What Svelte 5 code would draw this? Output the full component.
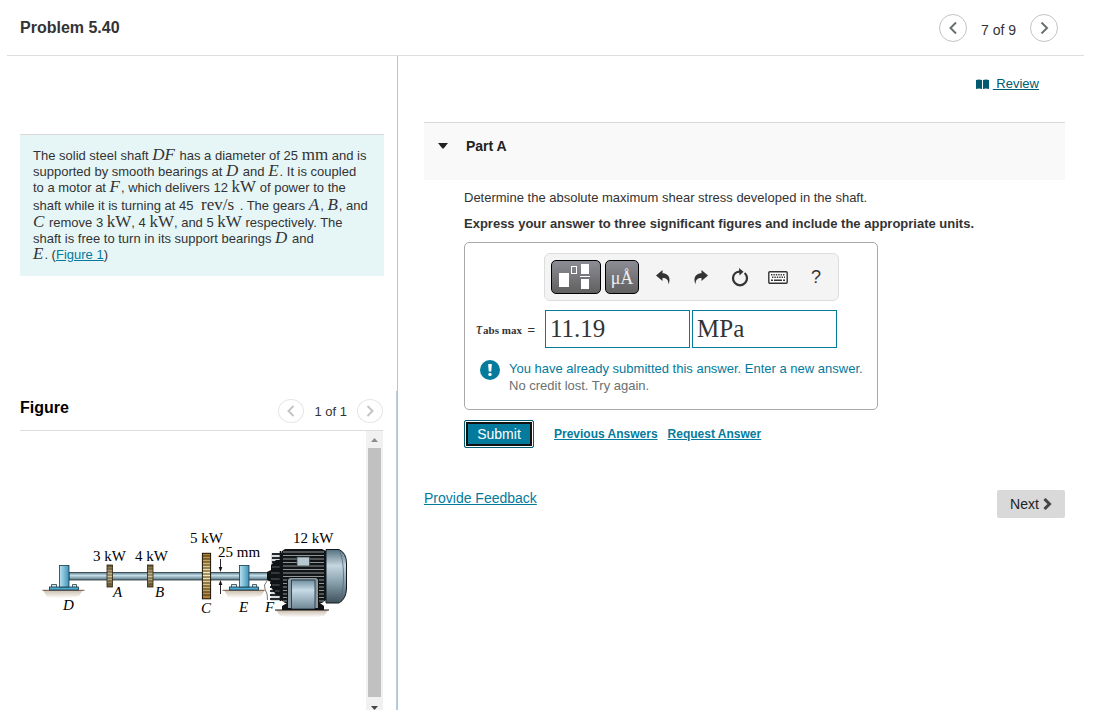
<script lang="ts">
  let answer = $state("11.19");
  let units = $state("MPa");
  let open = $state(true);

  const fins = Array.from({ length: 15 }, (_, i) => 32 + i * 3.5);
  const rearFins = [34, 38, 42, 46, 50, 63, 67, 71, 75, 79];
  const smallTeeth = [45, 48, 51, 54, 57, 60, 63];
  const bigTeeth = [36, 39, 42, 45, 48, 51, 54, 57, 60, 63, 66, 69, 72, 75];
</script>

<div class="page">
  <header>
    <h1>Problem 5.40</h1>
    <nav class="pager" aria-label="Items">
      <button class="round" aria-label="Previous item">
        <svg width="10" height="12" viewBox="0 0 10 12"><path d="M8 0.5 L2.5 6 L8 11.5" /></svg>
      </button>
      <span>7 of 9</span>
      <button class="round" aria-label="Next item">
        <svg width="10" height="12" viewBox="0 0 10 12"><path d="M2.5 0.5 L8 6 L2.5 11.5" /></svg>
      </button>
    </nav>
  </header>

  <main>
    <section class="left">
      <div class="intro">
        <p>
          The solid steel shaft <i>DF</i> has a diameter of 25 <b>mm</b> and is<br />
          supported by smooth bearings at <i>D</i> and <i>E</i>. It is coupled<br />
          to a motor at <i>F</i>, which delivers 12 <b>kW</b> of power to the<br />
          shaft while it is turning at 45 <b class="fraction">rev/s</b> . The gears <i>A</i>, <i>B</i>, and<br />
          <i>C</i> remove 3 <b>kW</b>, 4 <b>kW</b>, and 5 <b>kW</b> respectively. The<br />
          shaft is free to turn in its support bearings <i>D</i> and<br />
          <i>E</i>. (<a href="#figure">Figure 1</a>)
        </p>
      </div>

      <div class="figure" id="figure">
        <div class="figure-head">
          <h2>Figure</h2>
          <nav class="pager small" aria-label="Figures">
            <button class="round" aria-label="Previous figure" disabled>
              <svg width="10" height="12" viewBox="0 0 10 12"><path d="M7.5 1 L2.5 6 L7.5 11" /></svg>
            </button>
            <span>1 of 1</span>
            <button class="round" aria-label="Next figure" disabled>
              <svg width="10" height="12" viewBox="0 0 10 12"><path d="M2.5 1 L7.5 6 L2.5 11" /></svg>
            </button>
          </nav>
        </div>

        <div class="figure-body">
          <div class="drawing">
            <svg width="330" height="110" viewBox="0 0 330 110" role="img" aria-label="Shaft with gears and motor">
              <defs>
                <linearGradient id="shaft" x1="0" y1="0" x2="0" y2="1">
                  <stop offset="0" stop-color="#5f7f8c" />
                  <stop offset="0.4" stop-color="#c3dde8" />
                  <stop offset="1" stop-color="#54727f" />
                </linearGradient>
                <linearGradient id="block" x1="0" y1="0" x2="1" y2="0">
                  <stop offset="0" stop-color="#b9e2f1" />
                  <stop offset="1" stop-color="#3f93b8" />
                </linearGradient>
                <linearGradient id="brass" x1="0" y1="0" x2="0" y2="1">
                  <stop offset="0" stop-color="#a97824" />
                  <stop offset="0.45" stop-color="#fff2bd" />
                  <stop offset="1" stop-color="#a8752a" />
                </linearGradient>
                <linearGradient id="bronze" x1="0" y1="0" x2="0" y2="1">
                  <stop offset="0" stop-color="#74643f" />
                  <stop offset="0.5" stop-color="#d4c79f" />
                  <stop offset="1" stop-color="#69572f" />
                </linearGradient>
                <linearGradient id="cap" x1="0" y1="0" x2="0" y2="1">
                  <stop offset="0" stop-color="#55707f" />
                  <stop offset="0.3" stop-color="#c5d6df" />
                  <stop offset="0.6" stop-color="#8ba3b0" />
                  <stop offset="1" stop-color="#3f515d" />
                </linearGradient>
                <linearGradient id="box" x1="0" y1="0" x2="0" y2="1">
                  <stop offset="0" stop-color="#6f8fa0" />
                  <stop offset="0.35" stop-color="#c7dbe6" />
                  <stop offset="1" stop-color="#6e8796" />
                </linearGradient>
                <linearGradient id="ground" x1="0" y1="0" x2="0" y2="1">
                  <stop offset="0" stop-color="#c9bba9" />
                  <stop offset="1" stop-color="#ffffff" />
                </linearGradient>
              </defs>

              <path d="M13 70 H53 L49 76 Q34 80 17 77 Z" fill="url(#ground)" />
              <path d="M194 70 H235 L231 76 Q215 80 198 77 Z" fill="url(#ground)" />
              <path d="M246 90 H298 L294 96 Q270 99 250 96 Z" fill="url(#ground)" />

              <rect x="39" y="52.5" width="200" height="7.5" fill="url(#shaft)" stroke="#26343b" stroke-width="0.8" />

              {#each [29.5, 209.5] as x}
                <path d="M{x - 17} 70.3 H{x + 25}" stroke="#6b4b3b" stroke-width="0.9" />
                <path
                  d="M{x - 8} 67 V64.5 H{x - 3} V67 M{x + 13} 67 V64.5 H{x + 17} V67"
                  fill="#d4e6ed"
                  stroke="#263e49"
                  stroke-width="0.8"
                />
                <rect x={x - 10} y="67" width="29" height="3" fill="#4eaad0" stroke="#16323f" stroke-width="0.8" />
                <rect {x} y="45.5" width="9.5" height="21.5" fill="url(#block)" stroke="#173b4c" stroke-width="0.8" />
              {/each}

              {#each [77, 117.5] as x}
                <rect {x} y="45" width="5.5" height="22" fill="url(#bronze)" stroke="#2c2412" stroke-width="0.8" />
                {#each smallTeeth as y}
                  <path d="M{x} {y + 1} h5.5" stroke="#46381c" stroke-width="0.8" />
                {/each}
              {/each}

              <rect x="172.4" y="33.3" width="8.2" height="45.5" fill="url(#brass)" stroke="#171206" />
              {#each bigTeeth as y}
                <path d="M172 {y} h9" stroke="#2d210b" stroke-width="0.9" />
              {/each}

              <g stroke="#111" stroke-width="0.9" fill="#111">
                <path d="M190.5 39 V50 M190.5 74 V62" />
                <path d="M188.7 47 h3.6 L190.5 52 Z M188.7 65 h3.6 L190.5 60 Z" stroke="none" />
              </g>

              <path d="M241 33 H252 V81 H241 Z" fill="#d8dcdd" />
              {#each rearFins as y}
                <path d="M{y < 57 ? 242 : 240} {y} H252" stroke="#24292b" stroke-width="2" />
              {/each}
              <path d="M237 52 L241 50 V45 L246 40 H252 V75 H246 L241 67 V62 L237 60 Z" fill="#101314" />
              <path d="M242 47 h8 M241 53 h9 M241 59 h9 M242 65 h8 M245 71 h6" stroke="#697277" stroke-width="0.8" />

              <path d="M252 31 L255 29 H292 L296 31 V80 L292 83 H255 L251 80 V34 Z" fill="#121516" />
              {#each fins as y}
                <path d="M253 {y} H294" stroke="#aeb5b8" stroke-width="0.8" />
              {/each}
              <path d="M250.5 31 V81" stroke="#101314" stroke-width="1.6" />
              <rect x="267" y="37" width="12.5" height="9" fill="#b8c8d0" stroke="#38464d" stroke-width="0.8" />

              <path d="M296 29.5 H309 Q316.5 33 316.5 43 V69 Q316 79 309 83 H296 Z" fill="url(#cap)" stroke="#131a1f" />
              <path d="M309 30 Q313.5 38 313.5 56 Q313.5 74 309 82.5" fill="none" stroke="#526a78" stroke-width="0.8" />

              <path d="M252 90 V86 L257 83 H290 L294 86 V90 Z" fill="#0f1112" />
              <path d="M257.5 88 V60 Q258 57.5 261 57.5 H285 Q288 57.5 288.5 60 V88" fill="#8b9ba4" stroke="#111" />
              <path d="M261.5 60 H285 V89 H261.5 Z" fill="url(#box)" stroke="#1d2a32" stroke-width="0.8" />
              <path d="M245 90 H299" stroke="#111" />
              <path d="M237 61 Q233 65 235 69 Q238 74 237.5 80" fill="none" stroke="#555" stroke-width="0.8" />

              <g class="labels">
                <text x="63" y="41">3 kW</text>
                <text x="105" y="41">4 kW</text>
                <text x="160" y="23">5 kW</text>
                <text x="188" y="37">25 mm</text>
                <text x="263" y="23">12 kW</text>
                <g font-style="italic">
                  <text x="33" y="90">D</text>
                  <text x="83" y="77">A</text>
                  <text x="125" y="77">B</text>
                  <text x="171" y="93">C</text>
                  <text x="209" y="92">E</text>
                  <text x="235" y="92">F</text>
                </g>
              </g>
            </svg>
          </div>
          <div class="scrollbar" aria-hidden="true">
            <svg width="17" height="17" viewBox="0 0 17 17"><path d="M5 11 L8.5 7 L12 11 Z" fill="#8c8c8c" /></svg>
            <div class="thumb"></div>
            <svg width="17" height="13" viewBox="0 0 17 13"><path d="M5 9 L8.5 13 L12 9 Z" fill="#454545" /></svg>
          </div>
        </div>
      </div>
    </section>

    <section class="right">
      <div class="review">
        <svg width="13" height="11" viewBox="0 0 13 11">
          <path d="M0 1 Q3 0 6 1 V10 Q3 9 0 10 Z M7 1 Q10 0 13 1 V10 Q10 9 7 10 Z" fill="#005a70" />
        </svg>
        <a href="#review">&nbsp;Review</a>
      </div>

      <button class="part" aria-expanded={open} onclick={() => (open = !open)}>
        <svg width="10" height="6" viewBox="0 0 10 6"><path d="M0 0 H10 L6 5 Q5 6 4 5 Z" fill="#222" /></svg>
        <span>Part A</span>
      </button>

      {#if open}
        <div class="question">
          <p>Determine the absolute maximum shear stress developed in the shaft.</p>
          <p><strong>Express your answer to three significant figures and include the appropriate units.</strong></p>

          <div class="answer">
            <div class="toolbar">
              <button class="dark wide" aria-label="Templates">
                <svg width="34" height="26" viewBox="0 0 34 26">
                  <rect x="0" y="9" width="10" height="14" fill="#fff" />
                  <rect x="12.5" y="2.5" width="5" height="7" fill="none" stroke="#fff" />
                  <rect x="22" y="0" width="8" height="10" fill="#fff" />
                  <rect x="21" y="12" width="10" height="1" fill="#fff" />
                  <rect x="22" y="15" width="8" height="10" fill="#fff" />
                </svg>
              </button>
              <button class="dark">μÅ</button>
              <button class="tool" aria-label="Undo">
                <svg width="14" height="15" viewBox="0 0 14 15">
                  <path d="M0 5.5 L6.5 0 V3.2 C11.5 3.2 15.5 7 12.5 14.5 C12.6 10 10.5 8 6.5 8 V11 Z" fill="#333" />
                </svg>
              </button>
              <button class="tool" aria-label="Redo">
                <svg width="14" height="15" viewBox="0 0 14 15">
                  <path d="M14 5.5 L7.5 0 V3.2 C2.5 3.2 -1.5 7 1.5 14.5 C1.4 10 3.5 8 7.5 8 V11 Z" fill="#333" />
                </svg>
              </button>
              <button class="tool" aria-label="Reset">
                <svg width="18" height="19" viewBox="0 0 18 19">
                  <path d="M13.6 5 A7 7 0 1 1 4.4 5 Q6.5 3.4 9.5 3.6" fill="none" stroke="#333" stroke-width="2.2" />
                  <path d="M8 0 L12.5 3.7 L8.5 7.4 Z" fill="#333" />
                </svg>
              </button>
              <button class="tool" aria-label="Keyboard">
                <svg width="20" height="13" viewBox="0 0 20 13">
                  <rect x="0.8" y="0.8" width="18.4" height="11.4" rx="1" fill="#fff" stroke="#333" stroke-width="1.4" />
                  <path d="M3 3.8 H17 M4 6.3 H17" stroke="#333" stroke-width="1.4" stroke-dasharray="1.4 1" />
                  <path d="M3 9.2 H5 M6 9.2 H14 M15 9.2 H17" stroke="#333" stroke-width="1.4" />
                </svg>
              </button>
              <button class="tool help" aria-label="Help">?</button>
            </div>

            <div class="fields">
              <label for="value"><span class="tau">τ</span><span class="sub">abs max</span> =</label>
              <input id="value" bind:value={answer} />
              <input aria-label="Units" bind:value={units} />
            </div>

            <div class="message">
              <svg width="20" height="20" viewBox="0 0 20 20">
                <circle cx="10" cy="10" r="10" fill="#047a9c" />
                <path d="M8.2 4 H11.8 L11.3 11.4 H8.7 Z" fill="#fff" />
                <circle cx="10" cy="14.4" r="1.7" fill="#fff" />
              </svg>
              <p>
                <span>You have already submitted this answer. Enter a new answer.</span><br />
                No credit lost. Try again.
              </p>
            </div>
          </div>

          <div class="actions">
            <button class="submit">Submit</button>
            <a href="#previous">Previous Answers</a>
            <a href="#request">Request Answer</a>
          </div>
        </div>
      {/if}

      <footer>
        <a href="#feedback">Provide Feedback</a>
        <button class="next">
          Next
          <svg width="9" height="12" viewBox="0 0 9 12"><path d="M1.5 1 L6.5 6 L1.5 11" /></svg>
        </button>
      </footer>
    </section>
  </main>
</div>

<style>
  :global(body) {
    margin: 0;
    background: #fff;
  }

  .page {
    display: flex;
    flex-direction: column;
    height: 100vh;
    box-sizing: border-box;
    padding: 0 18px 0 7px;
    overflow: hidden;
    font-family: "Liberation Sans", Arial, sans-serif;
    font-size: 13px;
    line-height: 16px;
    color: #333;
  }

  h1,
  h2,
  p {
    margin: 0;
  }

  button,
  input {
    box-sizing: border-box;
    margin: 0;
    padding: 0;
    font-family: inherit;
  }

  svg {
    display: block;
    flex: none;
  }

  a {
    color: #047a9c;
  }

  header {
    display: flex;
    justify-content: space-between;
    align-items: center;
    height: 55px;
    flex: none;
    padding: 0 26px 0 13px;
    border-bottom: 1px solid #ddd;
  }

  h1,
  h2 {
    font-size: 16px;
    line-height: 20px;
  }

  h2 {
    color: #000;
  }

  .pager {
    display: flex;
    align-items: center;
    gap: 14px;
    font-size: 14px;
  }

  .pager span {
    padding-top: 4px;
  }

  .round {
    display: flex;
    align-items: center;
    justify-content: center;
    width: 28px;
    height: 28px;
    border: 1px solid #c4c4c4;
    border-radius: 50%;
    background: #fff;
  }

  .round path {
    fill: none;
    stroke: #6a7070;
    stroke-width: 2;
  }

  .small {
    gap: 10px;
    font-size: 13px;
  }

  .small .round {
    width: 26px;
    height: 24px;
    border-color: #e6e6e6;
  }

  .small .round path {
    stroke: #c4c4c4;
  }

  .small span {
    padding-top: 2px;
  }

  main {
    display: grid;
    grid-template-columns: 391px 1fr;
    flex: 1;
    min-height: 0;
  }

  .left {
    display: flex;
    flex-direction: column;
    min-height: 0;
    box-sizing: border-box;
    padding-top: 78px;
    border-right: 1px solid #bcc5cc;
  }

  .intro {
    margin: 0 13px;
    padding: 13px 0 13px 13px;
    border-top: 1px solid #d9d9d9;
    background: #e6f6f7;
    white-space: nowrap;
  }

  .intro i,
  .intro b {
    font-family: "Liberation Serif", serif;
    font-size: 17px;
    font-weight: normal;
    line-height: 12px;
  }

  .intro i {
    padding-right: 1px;
  }

  .intro .fraction {
    display: inline-block;
    padding: 3px 2px 4px 4px;
  }

  .figure {
    display: flex;
    flex-direction: column;
    flex: 1;
    min-height: 0;
    margin-top: 115px;
    padding: 0 13px;
    border-right: 1px solid #b8cce0;
  }

  .figure-head {
    display: flex;
    justify-content: space-between;
    align-items: center;
    height: 39px;
    flex: none;
    border-bottom: 1px solid #ddd;
  }

  .figure-head h2 {
    padding-bottom: 6px;
  }

  .figure-body {
    display: flex;
    flex: 1;
    min-height: 0;
  }

  .drawing {
    flex: 1;
    min-width: 0;
    padding: 89px 0 0 10px;
  }

  .labels {
    font-family: "Liberation Serif", serif;
    font-size: 15px;
    fill: #000;
  }

  .scrollbar {
    display: flex;
    flex-direction: column;
    width: 17px;
    background: #f1f1f1;
  }

  .thumb {
    flex: 1;
    margin: 0 2px;
    background: #c1c1c1;
  }

  .right {
    padding: 0 19px 0 26px;
  }

  .review {
    display: flex;
    justify-content: flex-end;
    align-items: center;
    gap: 4px;
    height: 16px;
    padding: 20px 26px 30px 0;
  }

  .review a {
    color: #005a70;
  }

  .part {
    display: flex;
    align-items: center;
    gap: 18px;
    width: 100%;
    height: 58px;
    padding: 0 14px 12px;
    border: 0;
    border-top: 1px solid #d9d9d9;
    background: #f9f9f9;
    font-size: 14px;
    font-weight: bold;
    color: #222;
  }

  .question {
    padding: 10px 0 0 40px;
  }

  .question > p {
    margin-bottom: 10px;
  }

  .answer {
    box-sizing: border-box;
    width: 414px;
    height: 168px;
    padding: 10px 0 0 11px;
    border: 1px solid #a9a9a9;
    border-radius: 5px;
  }

  .toolbar {
    display: flex;
    align-items: center;
    box-sizing: border-box;
    width: 295px;
    height: 48px;
    margin-left: 68px;
    padding: 0 3px 0 6px;
    border: 1px solid #ddd;
    border-radius: 6px;
    background: #f4f4f4;
  }

  .dark {
    display: flex;
    align-items: center;
    justify-content: center;
    width: 34px;
    height: 34px;
    margin-right: 5px;
    padding-top: 2px;
    border: 1px solid #000;
    border-radius: 5px;
    background: linear-gradient(#8c8c95, #606060);
    font-family: "Liberation Serif", serif;
    font-size: 18px;
    color: #eee;
  }

  .wide {
    width: 50px;
    margin-right: 4px;
    padding-top: 0;
  }

  .tool {
    display: flex;
    align-items: center;
    justify-content: center;
    flex: 1;
    height: 34px;
    border: 0;
    background: none;
    color: #333;
  }

  .help {
    font-size: 18px;
  }

  .fields {
    display: flex;
    align-items: center;
    gap: 2px;
    margin-top: 9px;
  }

  .fields label {
    width: 67px;
    font-size: 13px;
    white-space: nowrap;
  }

  .tau {
    padding-right: 1px;
    font-family: "Liberation Serif", serif;
    font-style: italic;
    font-size: 17px;
  }

  .sub {
    padding-right: 2px;
    font-family: "Liberation Serif", serif;
    font-size: 11px;
    font-weight: bold;
  }

  .fields input {
    width: 145px;
    height: 38px;
    padding: 0 4px;
    border: 1px solid #047a9c;
    border-radius: 0;
    font-family: "Liberation Serif", serif;
    font-size: 25px;
    color: #333;
  }

  .message {
    display: flex;
    gap: 9px;
    margin: 12px 0 0 4px;
    line-height: 17px;
    color: #6a7070;
  }

  .message span {
    color: #047a9c;
  }

  .actions {
    display: flex;
    align-items: center;
    gap: 10px;
    margin-top: 10px;
    font-size: 12px;
    font-weight: bold;
  }

  .submit {
    width: 70px;
    height: 28px;
    margin-right: 10px;
    border: 1px solid #005a70;
    border-radius: 2px;
    background: #047a9c;
    box-shadow: inset 0 0 0 1px #fff, inset 0 0 0 3px #111;
    font-size: 14px;
    color: #fff;
  }

  footer {
    display: flex;
    justify-content: space-between;
    align-items: flex-start;
    margin-top: 42px;
    font-size: 14px;
  }

  .next {
    display: flex;
    align-items: center;
    justify-content: center;
    gap: 4px;
    width: 68px;
    height: 28px;
    border: 0;
    border-radius: 2px;
    background: #d9d9d9;
    font-size: 14px;
    color: #222;
  }

  .next path {
    fill: none;
    stroke: #444;
    stroke-width: 3;
  }
</style>
